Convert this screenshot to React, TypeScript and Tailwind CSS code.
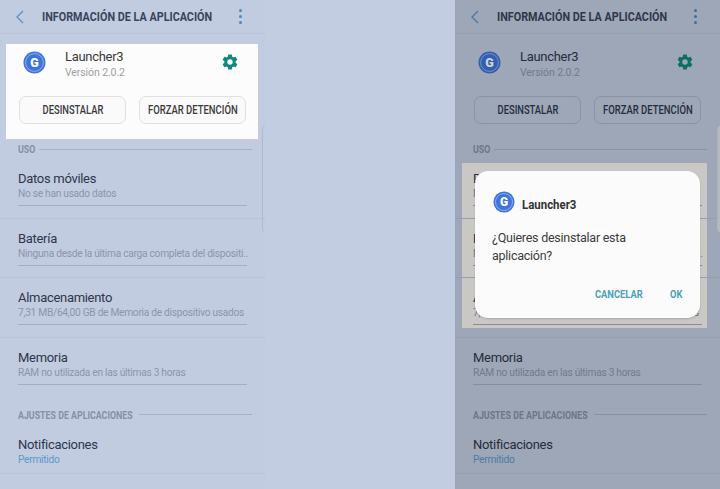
import React from 'react';

const ROBOTO = "font-['Roboto',sans-serif]";

const AppIcon = ({ size }: { size: number }) => (
  <svg width={size} height={size} viewBox="0 0 24 24">
    <circle cx="12" cy="12" r="11.5" fill="#3f74d8" />
    <circle cx="12" cy="12" r="9.3" fill="none" stroke="#a9c3f2" strokeWidth="0.8" />
    <text x="12" y="16.6" textAnchor="middle" fontFamily="Roboto, sans-serif" fontWeight="900" fontSize="13" fill="#ffffff">G</text>
  </svg>
);

const Gear = () => (
  <svg width="18" height="18" viewBox="0 0 24 24" fill="#12877c">
    <path d="M19.4 13c.04-.33.06-.66.06-1s-.02-.67-.06-1l2.1-1.65c.2-.15.25-.42.13-.64l-2-3.46c-.12-.22-.39-.3-.61-.22l-2.49 1a7.3 7.3 0 0 0-1.69-.98l-.38-2.65A.49.49 0 0 0 14 2h-4c-.25 0-.46.18-.49.42l-.38 2.65c-.61.25-1.17.59-1.69.98l-2.49-1c-.23-.09-.49 0-.61.22l-2 3.46c-.13.22-.07.49.12.64L4.57 11c-.04.33-.07.66-.07 1s.03.67.07 1l-2.11 1.65c-.19.15-.25.42-.12.64l2 3.46c.12.22.39.3.61.22l2.49-1c.52.4 1.08.73 1.69.98l.38 2.65c.03.24.24.42.49.42h4c.25 0 .46-.18.49-.42l.38-2.65c.61-.25 1.17-.59 1.69-.98l2.49 1c.23.09.49 0 .61-.22l2-3.46c.12-.22.07-.49-.13-.64L19.4 13zM12 15.6a3.6 3.6 0 1 1 0-7.2 3.6 3.6 0 0 1 0 7.2z" />
  </svg>
);

const SectionHeader = ({ label, width }: { label: string; width: number }) => (
  <div className="flex h-5 items-center pl-[18px] pr-[13px]">
    <span className="origin-left scale-x-[0.84] whitespace-nowrap pt-[2px] text-[10.5px] font-bold text-[#8790a6]" style={{ width }}>
      {label}
    </span>
    <div className="h-px flex-1 bg-[#a7b1c6]" />
  </div>
);

const Row = ({ title, sub, blue, inner = true, faint = true, short }: { title: string; sub?: string; blue?: boolean; inner?: boolean; faint?: boolean; short?: boolean }) => (
  <div className={`${short ? 'h-[49.5px]' : 'h-[59.67px]'} px-[14px] pt-[11px] ${faint ? 'border-b border-[#b8c3d9]' : ''}`}>
    <div className="px-1">
      <div className="text-[13px] leading-[18px] tracking-[-0.3px] text-[#2f364a]">{title}</div>
      {sub && (
        <div className={`whitespace-nowrap text-[10.2px] leading-3 tracking-[-0.28px] ${blue ? 'text-[#5f97c8]' : 'text-[#8c95ab]'}`}>{sub}</div>
      )}
    </div>
    {inner && <div className="ml-1 mt-[5px] h-px w-[229px] bg-[#a3adc3]" />}
  </div>
);

const Phone = ({ highlight }: { highlight?: boolean }) => (
  <div className={`relative h-[489px] w-[265px] overflow-hidden bg-[#c1cce1] ${ROBOTO}`}>
    {/* grey box behind the dialog, the list shows through it */}
    {!highlight && <div className="absolute left-[7px] top-[163px] h-[165px] w-[245px] bg-[#f6f5f0]" />}

    <div className="relative">
      <div className="flex h-[34px] items-center border-b border-[#b8c3d9]">
        <svg width="10" height="16" viewBox="0 0 10 16" className="ml-[15px]" fill="none" stroke="#5d8fc4" strokeWidth="1.3">
          <path d="M8 2 2 8l6 6" />
        </svg>
        <span className="ml-[17px] w-[184px] origin-left scale-x-[0.80] whitespace-nowrap text-[13.5px] font-bold text-[#3a435c]">
          INFORMACIÓN DE LA APLICACIÓN
        </span>
        <div className="ml-[13px] flex flex-col gap-[3px]">
          <div className="h-[3px] w-[3px] rounded-full bg-[#4f86b8]" />
          <div className="h-[3px] w-[3px] rounded-full bg-[#4f86b8]" />
          <div className="h-[3px] w-[3px] rounded-full bg-[#4f86b8]" />
        </div>
      </div>

      <div className={`mx-[6px] mt-[10px] h-[95px] w-[252px] ${highlight ? 'bg-[#fcfcfc]' : ''}`}>
        <div className="flex items-start pl-[14px] pt-1">
          <div className={`flex h-[28px] w-[28px] items-center justify-center rounded-[9px] ${highlight ? 'bg-white' : 'bg-[#c4cde0]/60'}`}>
            <AppIcon size={23} />
          </div>
          <div className="ml-[17px] pt-px">
            <div className={`text-[13px] leading-4 tracking-[-0.3px] ${highlight ? 'text-[#3a3a3a]' : 'text-[#2f364a]'}`}>Launcher3</div>
            <div className={`text-[10.5px] leading-[15px] tracking-[-0.1px] ${highlight ? 'text-[#a0a0a0]' : 'text-[#8c95ab]'}`}>Versión 2.0.2</div>
          </div>
          <div className="ml-auto mr-[19px] mt-[5px]">
            <Gear />
          </div>
        </div>
        <div className="mt-[16px] flex gap-[13px] pl-[13px]">
          <div className={`flex h-[28px] w-[107px] items-center justify-center rounded-[7px] border ${highlight ? 'border-[#e0e0e0] bg-[#fafafa]' : 'border-[#a9b3c8]'}`}>
            <span className={`scale-x-[0.78] whitespace-nowrap text-[12px] font-medium ${highlight ? 'text-[#3a3a3a]' : 'text-[#2f364a]'}`}>DESINSTALAR</span>
          </div>
          <div className={`flex h-[28px] w-[107px] items-center justify-center rounded-[7px] border ${highlight ? 'border-[#e0e0e0] bg-[#fafafa]' : 'border-[#a9b3c8]'}`}>
            <span className={`scale-x-[0.79] whitespace-nowrap text-[12px] font-medium ${highlight ? 'text-[#3a3a3a]' : 'text-[#2f364a]'}`}>FORZAR DETENCIÓN</span>
          </div>
        </div>
      </div>

      <SectionHeader label="USO" width={21} />
      <Row title="Datos móviles" sub="No se han usado datos" />
      <Row title="Batería" sub="Ninguna desde la última carga completa del dispositi.." />
      <Row title="Almacenamiento" sub="7,31 MB/64,00 GB de Memoria de dispositivo usados" />
      <Row title="Memoria" sub="RAM no utilizada en las últimas 3 horas" faint={false} />
      <div className="h-[7px]" />
      <SectionHeader label="AJUSTES DE APLICACIONES" width={121} />
      <Row title="Notificaciones" sub="Permitido" blue inner={false} short />
      <Row title="Permisos" inner={false} />
    </div>

    {/* scroll indicator */}
    <div className={`absolute left-[262px] top-[125px] h-[108px] w-2 rounded-l-[5px] border-l ${highlight ? 'border-[#aeb9cf]' : 'border-[#d5dbe6] bg-[#dfe3ea]'}`} />

    {!highlight && (
      <>
        <div className="absolute inset-0 bg-black/18" />
        <div className="absolute left-[20px] top-[171px] h-[147px] w-[225px] rounded-[13px] bg-[#fbfbfb] shadow-[0_1px_2px_rgba(0,0,0,0.15)]">
          <div className="flex items-center pl-[18px] pt-[18px]">
            <AppIcon size={22} />
            <span className="ml-[7px] mt-[6px] origin-left scale-x-[0.88] text-[13px] font-bold text-[#333333]">Launcher3</span>
          </div>
          <div className="mt-[14px] pl-[17px] text-[12.5px] leading-[18px] tracking-[-0.25px] text-[#3c3c3c]">
            ¿Quieres desinstalar esta
            <br />
            aplicación?
          </div>
          <div className="mt-[21px] flex items-center pl-[120px]">
            <span className="w-[75px] origin-left scale-x-[0.81] whitespace-nowrap text-[11.5px] font-bold text-[#4a9fb8]">CANCELAR</span>
            <span className="origin-left scale-x-[0.81] text-[11.5px] font-bold text-[#4a9fb8]">OK</span>
          </div>
        </div>
      </>
    )}
  </div>
);

const App: React.FC = () => (
  <div className="flex h-[489px] w-[720px] justify-between overflow-hidden bg-[#c3cde1]">
    <Phone highlight />
    <Phone />
  </div>
);

export default App;
